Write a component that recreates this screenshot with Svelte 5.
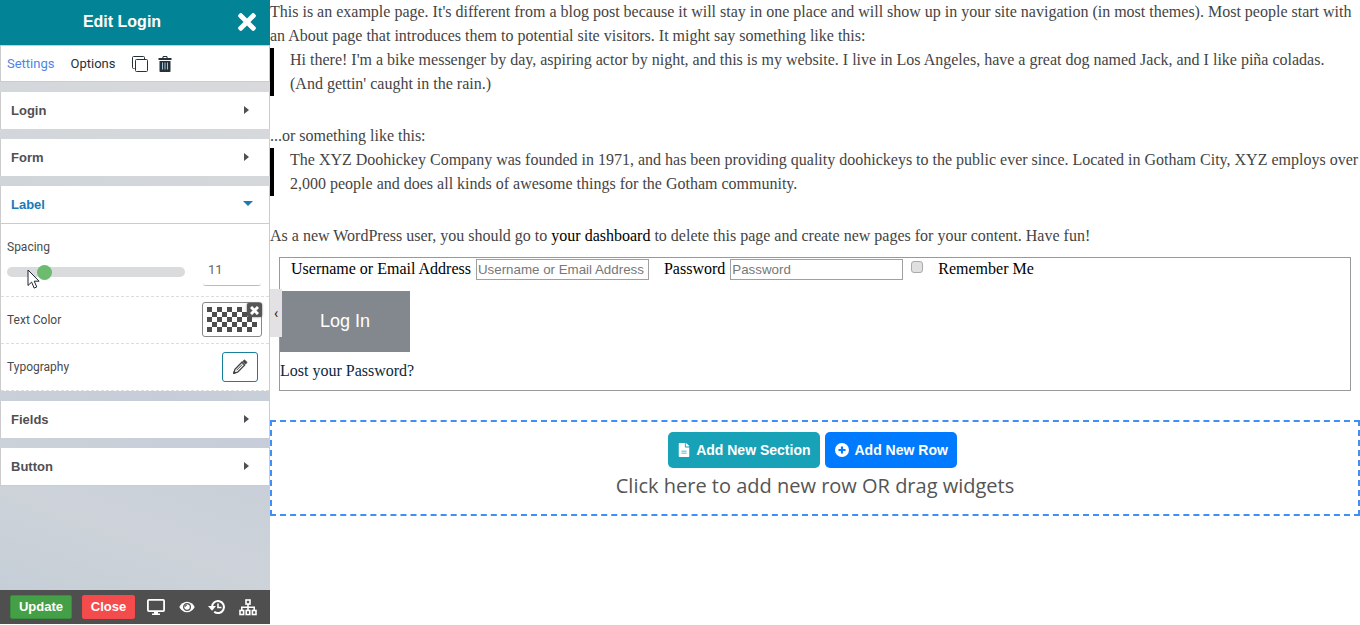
<script>
  let spacing = 11;
  let username = "";
  let password = "";
  let remember = false;
  let openPanel = "Label";

  const panels = ["Login", "Form", "Label", "Fields", "Button"];

  function toggle(name) {
    openPanel = openPanel === name ? null : name;
  }
</script>

<div class="builder">
  <aside class="sidebar">
    <header class="head">
      <h1>Edit Login</h1>
      <button type="button" class="icon close-panel" aria-label="Close editor">
        <svg width="18" height="26" viewBox="0 0 352 512" fill="currentColor">
          <path d="M242.72 256l100.07-100.07c12.28-12.28 12.28-32.19 0-44.48l-22.24-22.24c-12.28-12.28-32.19-12.28-44.48 0L176 189.28 75.93 89.21c-12.28-12.28-32.19-12.28-44.48 0L9.21 111.45c-12.28 12.28-12.28 32.19 0 44.48L109.28 256 9.21 356.07c-12.28 12.28-12.28 32.19 0 44.48l22.24 22.24c12.28 12.28 32.2 12.28 44.48 0L176 322.72l100.07 100.07c12.28 12.28 32.2 12.28 44.48 0l22.24-22.24c12.28-12.28 12.28-32.19 0-44.48L242.72 256z" />
        </svg>
      </button>
    </header>

    <nav class="tabs">
      <a href="#settings" class="active">Settings</a>
      <a href="#options">Options</a>
      <button type="button" class="icon" aria-label="Duplicate">
        <svg width="18" height="18" viewBox="0 0 18 18" fill="none" stroke="currentColor">
          <path d="M3.5 13.5H2.5a1 1 0 0 1-1-1v-10a1 1 0 0 1 1-1h10a1 1 0 0 1 1 1V4" />
          <rect x="4.5" y="4.5" width="12" height="12" rx="1" />
        </svg>
      </button>
      <button type="button" class="icon" aria-label="Delete">
        <svg width="14" height="18" viewBox="0 0 14 18">
          <path fill="currentColor" d="M0.5 3h3.7l0.8-2h4l0.8 2h3.7v2H0.5zM5.3 3h3.4l-0.4-1H5.7zM1.5 6h11v10.2a0.8 0.8 0 0 1-0.8 0.8H2.3a0.8 0.8 0 0 1-0.8-0.8z" fill-rule="evenodd" />
          <path stroke="#9fc4dc" d="M4.5 7.5v7M7 7.5v7M9.5 7.5v7" />
        </svg>
      </button>
    </nav>

    <div class="panels">
      {#each panels as name}
        <section class:open={openPanel === name}>
          <button type="button" class="panel-head" on:click={() => toggle(name)}>
            {name}
            <span class="caret"></span>
          </button>
          {#if openPanel === name && name === "Label"}
            <div class="row spacing">
              <label for="spacing">Spacing</label>
              <div class="slider">
                <input type="range" id="spacing" min="0" max="60" bind:value={spacing} />
                <input type="number" aria-label="Spacing value" bind:value={spacing} />
                <svg class="pointer" width="14" height="21" viewBox="0 0 14 21">
                  <path fill="#fff" stroke="#1d2233" d="M1 1v15.5l3.6-3.4 2.6 6 2.6-1.2-2.6-5.7h4.9z" />
                </svg>
              </div>
            </div>
            <div class="row">
              <span>Text Color</span>
              <div class="color">
                <button type="button" class="swatch" aria-label="Text color">
                  <span class="checker"></span>
                </button>
                <button type="button" class="clear" aria-label="Clear color">
                  <svg width="9" height="9" viewBox="0 0 9 9" stroke="#fff" stroke-width="3">
                    <path d="M1 1l7 7M8 1L1 8" />
                  </svg>
                </button>
              </div>
            </div>
            <div class="row">
              <span>Typography</span>
              <button type="button" class="edit" aria-label="Edit typography">
                <svg width="16" height="16" viewBox="0 0 16 16" fill="none" stroke="currentColor">
                  <path stroke-width="1.3" d="M2 14l0.9-3.6 7-7.2 2.8 2.8-7.1 7.1z" />
                  <path d="M4.6 11.200l5.600-5.700" />
                  <path fill="currentColor" d="M10.8 2.4l1-1c0.4-0.4 0.9-0.4 1.3 0l1.4 1.4c0.4 0.4 0.4 0.9 0 1.3l-1 1z" />
                  <path fill="currentColor" d="M1.5 14.5l0.6-2.2 1.6 1.6z" />
                </svg>
              </button>
            </div>
          {/if}
        </section>
      {/each}
    </div>

    <footer class="actions">
      <button type="button" class="update">Update</button>
      <button type="button" class="close">Close</button>
      <button type="button" class="icon" aria-label="Responsive view">
        <svg width="20" height="18" viewBox="0 0 20 18">
          <rect x="1.9" y="1.9" width="16.2" height="11.2" rx="1" fill="none" stroke="currentColor" stroke-width="1.8" />
          <path fill="currentColor" d="M8 13h4v2.4h2V17H6v-1.6h2z" />
        </svg>
      </button>
      <button type="button" class="icon" aria-label="Preview">
        <svg width="16" height="12" viewBox="0 0 16 12">
          <path fill="currentColor" d="M8 0.7c3.4 0 6 2.1 7.7 5.3-1.7 3.2-4.3 5.3-7.7 5.3S2 9.2 0.3 6C2 2.8 4.6 0.7 8 0.7z" />
          <circle cx="8" cy="6" r="3.4" fill="none" stroke="#4f4f4f" stroke-width="1.2" />
          <path fill="none" stroke="#4f4f4f" d="M6 6a2 2 0 0 1 2-2" />
        </svg>
      </button>
      <button type="button" class="icon" aria-label="Revisions">
        <svg width="18" height="16" viewBox="0 0 18 16" fill="none" stroke="currentColor" stroke-width="2">
          <path d="M4 8a6 6 0 1 1 2.2 4.7" />
          <path d="M10 4.5v4h3.500" stroke-width="1.600" />
          <path d="M0 7h8L4 11.800z" fill="currentColor" stroke="none" />
        </svg>
      </button>
      <button type="button" class="icon" aria-label="Page structure">
        <svg width="18" height="17" viewBox="0 0 18 17" fill="none" stroke="currentColor" stroke-width="1.6">
          <rect x="7" y="1" width="4" height="4" />
          <rect x="1" y="11.5" width="3.6" height="4" />
          <rect x="7.2" y="11.5" width="3.6" height="4" />
          <rect x="13.4" y="11.5" width="3.6" height="4" />
          <path d="M9 5v6.5M2.8 11.5V8.3h12.4v3.2" />
        </svg>
      </button>
    </footer>
    <button type="button" class="collapse" aria-label="Collapse sidebar">‹</button>
  </aside>

  <main>
    <p>
      This is an example page. It's different from a blog post because it will stay in one place and
      will show up in your site navigation (in most themes). Most people start with an About page
      that introduces them to potential site visitors. It might say something like this:
    </p>
    <blockquote>
      Hi there! I'm a bike messenger by day, aspiring actor by night, and this is my website. I live
      in Los Angeles, have a great dog named Jack, and I like piña coladas. (And gettin' caught in
      the rain.)
    </blockquote>
    <p>...or something like this:</p>
    <blockquote>
      The XYZ Doohickey Company was founded in 1971, and has been providing quality doohickeys to
      the public ever since. Located in Gotham City, XYZ employs over 2,000 people and does all
      kinds of awesome things for the Gotham community.
    </blockquote>
    <p>
      As a new WordPress user, you should go to <a href="#dashboard">your dashboard</a> to delete
      this page and create new pages for your content. Have fun!
    </p>

    <form class="login" on:submit|preventDefault>
      <div class="fields">
        <div class="field">
          <label for="username">Username or Email Address</label>
          <input type="text" id="username" placeholder="Username or Email Address" bind:value={username} />
        </div>
        <div class="field">
          <label for="password">Password</label>
          <input type="password" id="password" placeholder="Password" bind:value={password} />
        </div>
        <div class="remember">
          <input type="checkbox" id="remember" bind:checked={remember} />
          <label for="remember">Remember Me</label>
        </div>
      </div>
      <button type="submit">Log In</button>
      <a href="#lost">Lost your Password?</a>
    </form>

    <div class="drop-area">
      <div class="buttons">
        <button type="button" class="add-section">
          <svg width="12" height="14" viewBox="0 0 384 512" fill="currentColor">
            <path d="M224 136V0H24C10.7 0 0 10.7 0 24v464c0 13.3 10.7 24 24 24h336c13.3 0 24-10.7 24-24V160H248c-13.2 0-24-10.8-24-24zm64 236c0 6.6-5.4 12-12 12H108c-6.6 0-12-5.4-12-12v-8c0-6.6 5.4-12 12-12h168c6.6 0 12 5.4 12 12v8zm0-72c0 6.6-5.4 12-12 12H108c-6.6 0-12-5.4-12-12v-8c0-6.6 5.4-12 12-12h168c6.6 0 12 5.4 12 12v8zm96-178v6H256V0h6.1c6.4 0 12.5 2.5 17 7l97.9 98c4.5 4.5 7 10.6 7 17z" />
          </svg>
          Add New Section
        </button>
        <button type="button" class="add-row">
          <svg width="14" height="14" viewBox="0 0 14 14">
            <circle cx="7" cy="7" r="7" fill="currentColor" />
            <path stroke="#007bff" stroke-width="2.2" d="M7 3.500v7M3.500 7h7" />
          </svg>
          Add New Row
        </button>
      </div>
      <p>Click here to add new row OR drag widgets</p>
    </div>
  </main>
</div>

<style>
  :global(body) {
    margin: 0;
    background: #fff;
  }

  * {
    box-sizing: border-box;
  }

  button {
    cursor: pointer;
  }

  svg {
    display: block;
  }

  .builder {
    display: grid;
    grid-template-columns: 270px 1fr;
    min-height: 100vh;
  }

  .sidebar {
    position: relative;
    display: flex;
    flex-direction: column;
    font-family: Roboto, sans-serif;
    color: #4a4a4a;
    background: linear-gradient(200deg, #dcdbdd 0%, #d1d6da 35%, #c6cdd8 60%, #cdd3d9 80%, #c3ccd6 100%);
    border-bottom: 1px solid #fff;
  }

  .icon {
    padding: 0;
    border: 0;
    background: none;
    color: inherit;
  }

  .head {
    display: flex;
    align-items: center;
    height: 45px;
    padding: 0 14px 2px 6px;
    color: #fff;
    background: #028496;
  }

  .head h1 {
    flex: 1;
    margin: 0;
    font: bold 16px/20px "Liberation Sans", Arial, sans-serif;
    text-align: center;
  }

  .tabs {
    display: flex;
    align-items: center;
    height: 37px;
    padding: 0 6px;
    border: 1px solid #ccc;
    background: #fff;
    color: #263238;
    font-size: 13px;
  }

  .tabs a {
    margin-right: 16px;
    color: inherit;
    text-decoration: none;
  }

  .tabs .active {
    color: #4a86e8;
  }

  .tabs .icon + .icon {
    margin-left: 9px;
  }

  .panels {
    flex: 1;
    display: flex;
    flex-direction: column;
    gap: 10px;
    padding-top: 10px;
  }

  section {
    border: solid #ccc;
    border-width: 0 1px;
    background: #fff;
  }

  section:last-child {
    border-bottom-width: 1px;
  }

  .panel-head {
    display: flex;
    justify-content: space-between;
    align-items: center;
    width: 100%;
    height: 37px;
    padding: 0 20px 0 10px;
    border: 0;
    background: none;
    color: #4f4f55;
    font: bold 13px/20px "Liberation Sans", Arial, sans-serif;
  }

  .open .panel-head {
    height: 38px;
    padding-right: 16px;
    border-bottom: 1px solid #ccc;
    color: #1a7ab5;
  }

  .caret {
    margin-bottom: 2px;
    border: solid transparent;
    border-width: 4px 0 4px 5px;
    border-left-color: currentColor;
  }

  .open .caret {
    border-width: 5px 5px 0;
    border-color: currentColor transparent;
  }

  .row {
    display: flex;
    justify-content: space-between;
    align-items: center;
    height: 47px;
    padding: 0 7px 0 6px;
    border-bottom: 1px dashed #ddd;
    font-size: 12px;
  }

  .row.spacing {
    display: block;
    height: 73px;
    padding-top: 15px;
  }

  .spacing label {
    display: block;
    line-height: 16px;
  }

  .slider {
    position: relative;
    display: flex;
    align-items: center;
    justify-content: space-between;
  }

  input[type="range"] {
    appearance: none;
    width: 178px;
    height: 10px;
    margin: 0;
    border-radius: 5px;
    background: #dadbdc;
  }

  input[type="range"]::-webkit-slider-thumb {
    appearance: none;
    width: 15px;
    height: 15px;
    border-radius: 50%;
    background: #6cbb6f;
  }

  input[type="number"] {
    appearance: textfield;
    width: 58px;
    height: 28px;
    margin: 3px 0;
    margin-right: 1px;
    padding: 0 5px 4px;
    border: 0;
    border-bottom: 1px solid #bbb;
    border-radius: 3px;
    color: #666;
    font: 13px/20px Roboto, sans-serif;
  }

  input[type="number"]::-webkit-inner-spin-button {
    appearance: none;
    margin: 0;
  }

  .pointer {
    position: absolute;
    left: 20px;
    top: 14px;
    pointer-events: none;
  }

  .color {
    position: relative;
    margin-bottom: 1px;
  }

  .swatch {
    display: block;
    width: 60px;
    height: 35px;
    padding: 4px;
    border: 1px solid #888;
    border-radius: 3px;
    background: #fff;
  }

  .checker {
    display: block;
    width: 50px;
    height: 25px;
    background: repeating-conic-gradient(#fff 0 25%, #4d4d4d 0 50%) 0 0 / 10px 10px;
  }

  .clear {
    position: absolute;
    top: 1px;
    right: 0;
    display: grid;
    place-items: center;
    width: 15px;
    height: 14px;
    padding: 0;
    border: 0;
    border-radius: 2px;
    background: #555;
    box-shadow: 0 0 2px #555;
  }

  .edit {
    display: grid;
    place-items: center;
    width: 36px;
    height: 30px;
    margin: 0 4px 1px 0;
    padding: 0;
    border: 1px solid #17809a;
    border-radius: 3px;
    background: #fff;
    color: #444;
  }

  .actions {
    display: flex;
    align-items: center;
    height: 34px;
    padding: 0 12px 0 10px;
    background: #4f4f4f;
    color: #fff;
  }

  .update,
  .close {
    height: 24px;
    padding: 0;
    border: 1px solid #388e3c;
    border-radius: 2px;
    background: #43a047;
    color: #fff;
    font: bold 13px/20px "Liberation Sans", Arial, sans-serif;
  }

  .update {
    width: 62px;
  }

  .close {
    width: 53px;
    margin: 0 11px 0 10px;
    border-color: #f04a4a;
    background: #f44c4c;
  }

  .actions .icon + .icon {
    margin-left: 13px;
  }

  .collapse {
    position: absolute;
    left: 100%;
    top: 289px;
    width: 12px;
    height: 48px;
    padding: 0;
    border: 0;
    background: #e4e1e5;
    color: #222;
    font: 14px/20px Roboto, sans-serif;
  }

  main {
    color: #444;
    font: 16px/24px "Liberation Serif", "Times New Roman", serif;
  }

  main > p {
    margin: 0;
  }

  main > p a {
    color: #000;
    text-decoration: none;
  }

  blockquote {
    margin: 0 0 28px;
    padding-left: 16px;
    border-left: 4px solid #000;
  }

  .login {
    display: flex;
    flex-direction: column;
    align-items: flex-start;
    height: 134px;
    margin: 9px 9px 29px;
    border: 1px solid #999;
    color: #000;
  }

  .fields {
    display: flex;
    flex-wrap: wrap;
    gap: 4px;
    height: 33px;
    padding-top: 1px;
  }

  .field {
    display: flex;
    gap: 5px;
    height: 22px;
  }

  .fields label {
    margin-left: 11px;
    line-height: 20px;
  }

  .field input {
    width: 173px;
    height: 21px;
    padding: 0 1px;
    border: 1px solid #a0a0a0;
    font-family: "Liberation Sans", Arial, sans-serif;
  }

  .field input::placeholder {
    color: #777;
  }

  .remember {
    display: flex;
    gap: 4px;
    padding-left: 4px;
  }

  .remember input {
    appearance: none;
    width: 12px;
    height: 12px;
    margin: 2px 0 0;
    border: 1px solid #aaa;
    border-radius: 3px;
    background: #e0e0e0;
  }

  .remember input:checked {
    background: #17809a;
  }

  .login button {
    width: 130px;
    height: 61px;
    padding: 0 0 2px;
    border: 0;
    background: #82888d;
    color: #fff;
    font: 18px/24px "Liberation Sans", Arial, sans-serif;
  }

  .login a {
    margin-top: 7px;
    color: #0a2a3c;
    text-decoration: none;
  }

  .drop-area {
    height: 96px;
    padding-top: 10px;
    border: 2px dashed #3f8ff7;
    text-align: center;
  }

  .buttons {
    display: flex;
    justify-content: center;
    gap: 5px;
    padding-right: 5px;
  }

  .buttons button {
    display: flex;
    align-items: center;
    gap: 6px;
    height: 36px;
    padding: 0 9px 0 10px;
    border: 0;
    border-radius: 5px;
    color: #fff;
    font: bold 14px/20px "Liberation Sans", Arial, sans-serif;
  }

  .add-section {
    background: #17a2b8;
  }

  .add-row {
    background: #007bff;
  }

  .drop-area p {
    margin: 4px 0 0;
    color: #555;
    font: 20px/28px "Open Sans", sans-serif;
  }
</style>
